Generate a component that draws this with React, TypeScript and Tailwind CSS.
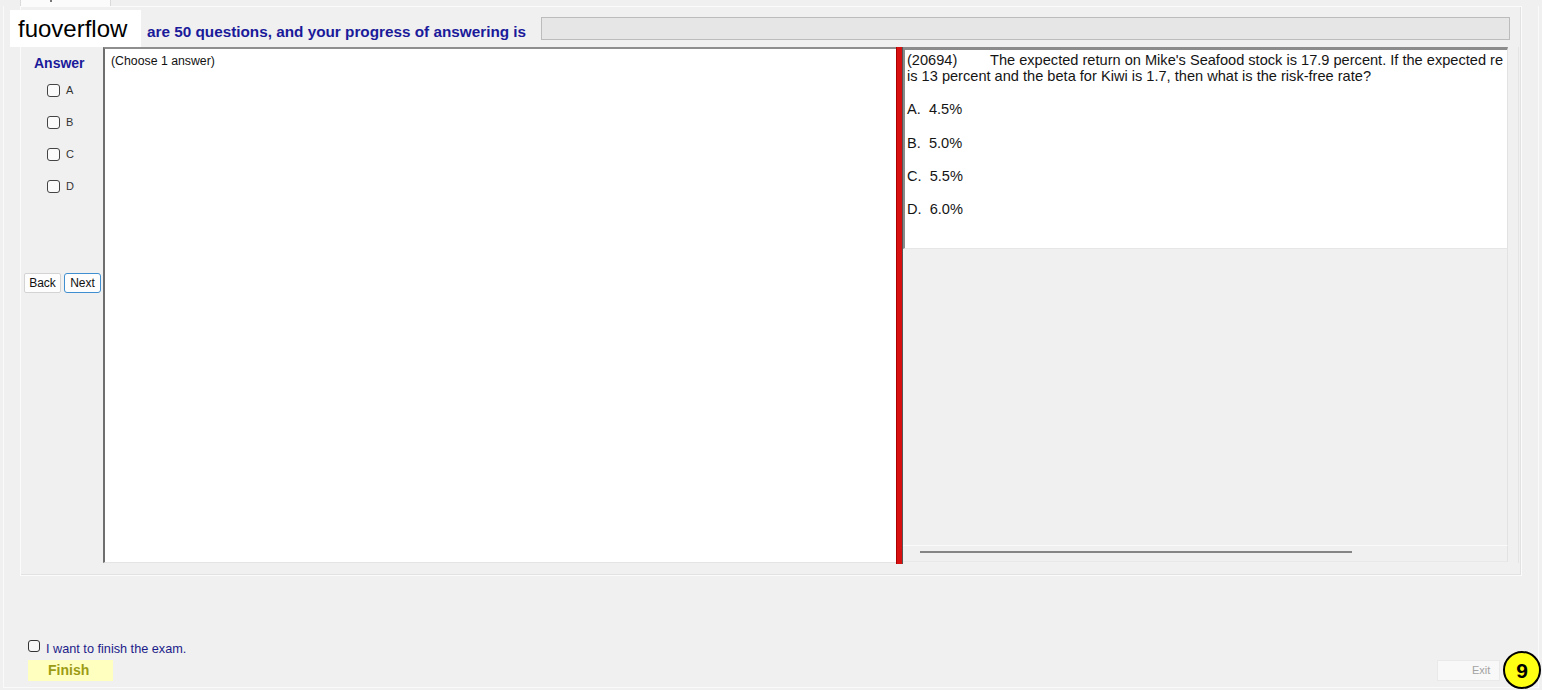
import React from "react";

function Box({ className = "" }: { className?: string }) {
  return <div className={"w-[13px] h-[13px] rounded-[3px] border border-[#444] bg-[#fbfbfb] " + className} />;
}

export default function App() {
  const font = { fontFamily: '"Liberation Sans", Arial, sans-serif' };
  return (
    <div className="w-[1542px] h-[690px] bg-[#f0f0f0] relative overflow-hidden text-black" style={font}>
      {/* top tab */}
      <div className="h-[6px] pl-[20px]">
        <div className="w-[91px] h-[6px] bg-[#fbfbfb] border-x border-[#dadada] flex justify-start pl-[29px]">
          <div className="w-[2px] h-[2px] bg-[#777]" />
        </div>
      </div>

      <div className="ml-[3px] mr-[3px] h-[682px] border-l border-b border-r border-[#fafafa] flex flex-col">
        {/* main panel */}
        <div className="ml-[16px] w-[1502px] h-[570px] border border-[#fbfbfb] shadow-[inset_-1px_-1px_0_#e2e2e2] flex flex-col">
          {/* header */}
          <div className="h-[40px] flex items-start pl-[126px]">
            <div className="w-[394px] mt-[16px] text-[15.3px] leading-[18px] font-bold text-[#1a1a9a] whitespace-nowrap">
              are 50 questions, and your progress of answering is
            </div>
            <div className="w-[969px] h-[23px] mt-[10px] bg-[#e6e6e6] border border-[#bcbcbc]" />
          </div>

          {/* main row */}
          <div className="h-[516px] flex">
            {/* left column */}
            <div className="w-[82px] flex flex-col">
              <div className="pt-[8px] pl-[13px] text-[14px] leading-[16px] font-bold text-[#1a1a9a]">Answer</div>
              <div className="mt-[3px] flex flex-col">
                {["A", "B", "C", "D"].map((l) => (
                  <div key={l} className="h-[32px] flex items-center pl-[26px] gap-[6px]">
                    <Box />
                    <span className="text-[11px] leading-[13px] text-[#333]">{l}</span>
                  </div>
                ))}
              </div>
              <div className="mt-[71px] pl-[3px] flex gap-[3px]">
                <div className="w-[37px] h-[20px] bg-[#fdfdfd] border border-[#d3d3d3] rounded-[2px] flex items-center justify-center text-[12px] text-[#111]">
                  Back
                </div>
                <div className="w-[37px] h-[20px] bg-[#fdfdfd] border border-[#3f8fd0] rounded-[3px] flex items-center justify-center text-[12px] text-[#111]">
                  Next
                </div>
              </div>
            </div>

            {/* middle panel */}
            <div className="w-[793px] h-[516px] bg-white border-l-2 border-t-2 border-l-[#6e6e6e] border-t-[#8e8e8e] border-b border-b-[#e4e4e4] pl-[6px] pt-[5px]">
              <div className="text-[12.3px] leading-[14px] text-[#111]">(Choose 1 answer)</div>
            </div>

            {/* splitter */}
            <div className="w-[7px] h-[517px] bg-[#d81010] border-r border-[#555] border-l border-l-[#a00]" />

            {/* right panel */}
            <div className="w-[605px] h-[516px] flex flex-col">
              <div className="h-[202px] bg-white border-t-[3px] border-t-[#8c8c8c] border-l-2 border-l-[#8a8a8a] border-r border-r-[#e2e2e2] border-b border-b-[#e6e6e6] pl-[2px] pt-[2px] overflow-hidden">
                <div className="text-[14.6px] leading-[16px] text-[#151515] whitespace-nowrap overflow-hidden">
                  <div className="flex">
                    <span className="w-[83px] shrink-0">(20694)</span>
                    <span className="shrink-0">The expected return on Mike's Seafood stock is 17.9 percent. If the expected re</span>
                  </div>
                  <div>is 13 percent and the beta for Kiwi is 1.7, then what is the risk-free rate?</div>
                </div>
                <div className="mt-[17px] flex flex-col text-[14.6px] leading-[16px] text-[#151515]">
                  <div className="h-[34px]">A.&nbsp; 4.5%</div>
                  <div className="h-[33px]">B.&nbsp; 5.0%</div>
                  <div className="h-[33px]">C.&nbsp; 5.5%</div>
                  <div className="h-[33px]">D.&nbsp; 6.0%</div>
                </div>
              </div>
              <div className="h-[296px] bg-[#f0f0f0] border-r border-r-[#e2e2e2]" />
              <div className="h-[17px] bg-[#f0f0f0] border-t border-t-[#fafafa] border-r border-r-[#e2e2e2] border-b border-b-[#e8e8e8] pl-[17px] pt-[5px]">
                <div className="w-[432px] h-[2px] bg-[#858585]" />
              </div>
            </div>

            {/* right strip */}
            <div className="w-[13px] flex">
              <div className="w-[10px]" />
              <div className="w-[1px] h-full bg-[#e4e4e4]" />
            </div>
          </div>
        </div>

        {/* bottom area */}
        <div className="flex-1 flex items-end justify-between pb-[6px]">
          <div className="pl-[24px] flex flex-col">
            <div className="flex items-start gap-[6px] h-[14px]">
              <div className="w-[12px] h-[12px] rounded-[3px] border border-[#333] bg-[#f6f6f6]" />
              <span className="mt-[2px] text-[12.7px] leading-[14px] text-[#1c1c8a]">I want to finish the exam.</span>
            </div>
            <div className="mt-[6px] w-[85px] h-[21px] bg-[#ffffc0] flex items-center pl-[20px] text-[14px] font-bold text-[#9c9c14]">
              Finish
            </div>
          </div>
          <div className="mr-[38px] w-[63px] h-[21px] bg-[#f8f8f8] border border-[#e9e9e9] flex items-center pl-[34px] text-[11px] text-[#a3a3a3]">
            Exit
          </div>
        </div>
      </div>

      {/* watermark */}
      <div className="absolute left-[10px] top-[10px] w-[131px] h-[37px] bg-white flex items-center pl-[8px] text-[24px] leading-[28px] text-black">
        fuoverflow
      </div>

      {/* badge */}
      <div className="absolute left-[1503px] top-[651px] w-[38px] h-[38px] rounded-full bg-[#ffff14] border-2 border-black flex items-center justify-center text-[21px] font-bold text-black leading-none">
        9
      </div>
    </div>
  );
}
